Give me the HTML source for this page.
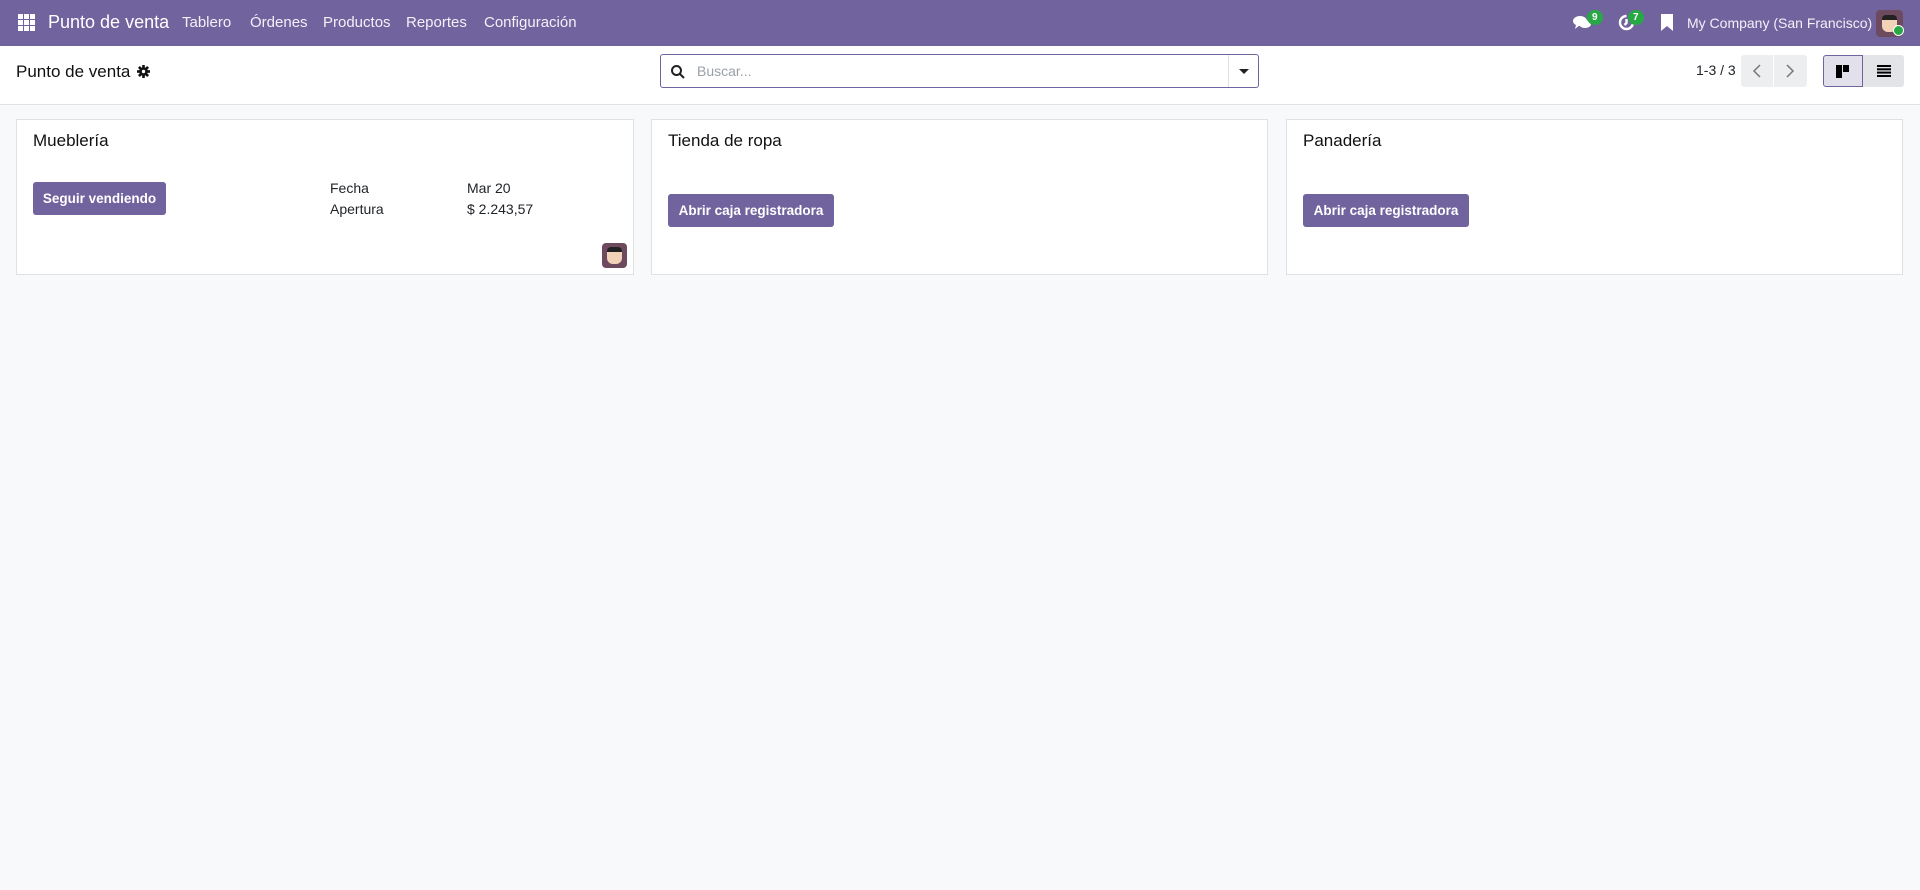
<!DOCTYPE html>
<html><head><meta charset="utf-8"><style>
*{box-sizing:border-box;margin:0;padding:0}
body{width:1920px;height:890px;background:#f8f9fb;font-family:"Liberation Sans",sans-serif;color:#212529;font-size:14px;position:relative;overflow:hidden}
.nav{position:absolute;left:0;top:0;width:1920px;height:46px;background:#71639e;color:#fff}
.nav span{position:absolute;top:14px;font-size:15px;color:#f3f0f8}
.cp{position:absolute;left:0;top:46px;width:1920px;height:59px;background:#fff;border-bottom:1px solid #e0e2e6}
.card{position:absolute;top:119px;height:156px;background:#fff;border:1px solid #dee2e6}
.card h3{position:absolute;left:16px;top:11px;font-size:17px;font-weight:normal;color:#111}
.btn{position:absolute;background:#71639e;color:#fff;border-radius:3px;font-size:13.5px;font-weight:bold;text-align:center;line-height:33px;height:33px}
.badge{position:absolute;top:10px;background:#28a745;color:#fff;font-size:10px;font-weight:bold;border-radius:8px;height:15px;line-height:15px;padding:0 5px}
</style></head><body>
<div class="nav">
<svg style="position:absolute;left:18px;top:14px" width="17" height="17" viewBox="0 0 17 17" fill="#fff"><rect x="0" y="0" width="5" height="5"/><rect x="6" y="0" width="5" height="5"/><rect x="12" y="0" width="5" height="5"/><rect x="0" y="6" width="5" height="5"/><rect x="6" y="6" width="5" height="5"/><rect x="12" y="6" width="5" height="5"/><rect x="0" y="12" width="5" height="5"/><rect x="6" y="12" width="5" height="5"/><rect x="12" y="12" width="5" height="5"/></svg>
<span style="left:48px;top:12px;font-size:18px;color:#fff">Punto de venta</span>
<span style="left:182px">Tablero</span>
<span style="left:250px">Órdenes</span>
<span style="left:323px">Productos</span>
<span style="left:406px">Reportes</span>
<span style="left:484px">Configuración</span>
<svg style="position:absolute;left:1573px;top:15px" width="18" height="15" viewBox="0 0 18 15" fill="#fff"><ellipse cx="7" cy="6" rx="7" ry="5"/><path d="M3 10 L2 14 L7 10Z"/><ellipse cx="12" cy="9" rx="6" ry="4"/></svg>
<div class="badge" style="left:1587px">9</div>
<svg style="position:absolute;left:1618px;top:14px" width="17" height="17" viewBox="0 0 17 17" fill="none" stroke="#fff" stroke-width="2.4"><path d="M15 8.5A6.5 6.5 0 1 1 8.5 2"/><path d="M8.5 5v4l-2 2"/></svg>
<div class="badge" style="left:1628px">7</div>
<svg style="position:absolute;left:1661px;top:14px" width="12" height="17" viewBox="0 0 12 17" fill="#fff"><path d="M0 0h12v17l-6-5-6 5z"/></svg>
<span style="left:1687px;font-size:14px;top:15px">My Company (San Francisco)</span>
<div style="position:absolute;left:1876px;top:10px;width:27px;height:27px;border-radius:4px;background:#6e4a5e"><div style="position:absolute;left:6px;top:5px;width:15px;height:17px;background:#f2d3b8;border-radius:4px 4px 6px 6px;border-top:5px solid #222"></div></div>
<div style="position:absolute;left:1893px;top:25px;width:11px;height:11px;border-radius:50%;background:#28a745;border:1.5px solid #fff"></div>
</div>
<div class="cp">
<div style="position:absolute;left:16px;top:16px;font-size:17px;color:#111">Punto de venta</div>
<svg style="position:absolute;left:137px;top:19px" width="13" height="13" viewBox="0 0 13 13"><g fill="#111"><circle cx="6.5" cy="6.5" r="4.3"/><rect x="5.2" y="0" width="2.6" height="13"/><rect x="0" y="5.2" width="13" height="2.6"/><rect x="5.2" y="0" width="2.6" height="13" transform="rotate(45 6.5 6.5)"/><rect x="5.2" y="0" width="2.6" height="13" transform="rotate(-45 6.5 6.5)"/></g><circle cx="6.5" cy="6.5" r="1.7" fill="#fff"/></svg>
<div style="position:absolute;left:660px;top:8px;width:599px;height:34px;border:1px solid #71639e;border-radius:3px;background:#fff">
<svg style="position:absolute;left:10px;top:10px" width="14" height="14" viewBox="0 0 14 14" fill="none" stroke="#222" stroke-width="2"><circle cx="5.5" cy="5.5" r="4.5"/><path d="M9 9l4 4"/></svg>
<span style="position:absolute;left:36px;top:8px;color:#9aa0a6;font-size:14px">Buscar...</span>
<div style="position:absolute;right:0;top:0;width:30px;height:32px;border-left:1px solid #dee2e6"><div style="position:absolute;left:10px;top:14px;border-left:5px solid transparent;border-right:5px solid transparent;border-top:5px solid #222"></div></div>
</div>
<span style="position:absolute;left:1696px;top:16px;font-size:14px">1-3 / 3</span>
<div style="position:absolute;left:1741px;top:9px;width:66px;height:32px;background:#eceef0;border-radius:3px"><div style="position:absolute;left:32px;top:0;width:1px;height:32px;background:#fff"></div>
<svg style="position:absolute;left:11px;top:9px" width="10" height="14" viewBox="0 0 10 14" fill="none" stroke="#777" stroke-width="1.5"><path d="M8 1L2 7l6 6"/></svg>
<svg style="position:absolute;left:44px;top:9px" width="10" height="14" viewBox="0 0 10 14" fill="none" stroke="#777" stroke-width="1.5"><path d="M2 1l6 6-6 6"/></svg></div>
<div style="position:absolute;left:1823px;top:9px;width:40px;height:32px;background:#e2e0eb;border:1px solid #71639e;border-radius:3px 0 0 3px"><div style="position:absolute;left:12px;top:9px;width:6px;height:13px;background:#000"></div><div style="position:absolute;left:19px;top:9px;width:6px;height:7px;background:#000"></div></div>
<div style="position:absolute;left:1863px;top:9px;width:41px;height:32px;background:#e2e4e8;border-radius:0 3px 3px 0"><svg style="position:absolute;left:14px;top:10px" width="14" height="12" viewBox="0 0 14 12" fill="#000"><rect y="0" width="14" height="2"/><rect y="3.3" width="14" height="2"/><rect y="6.6" width="14" height="2"/><rect y="10" width="14" height="2"/></svg></div>
</div>
<div class="card" style="left:16px;width:618px">
<h3>Mueblería</h3>
<div class="btn" style="left:16px;top:62px;width:133px">Seguir vendiendo</div>
<div style="position:absolute;left:313px;top:58px;line-height:21px;font-size:14px">Fecha<br>Apertura</div>
<div style="position:absolute;left:450px;top:58px;line-height:21px;font-size:14px">Mar 20<br>$ 2.243,57</div>
<div style="position:absolute;left:585px;top:123px;width:25px;height:25px;border-radius:4px;background:#6e4a5e"><div style="position:absolute;left:5px;top:4px;width:15px;height:17px;background:#f2d3b8;border-radius:4px 4px 6px 6px;border-top:5px solid #222"></div></div>
</div>
<div class="card" style="left:651px;width:617px">
<h3>Tienda de ropa</h3>
<div class="btn" style="left:16px;top:74px;width:166px">Abrir caja registradora</div>
</div>
<div class="card" style="left:1286px;width:617px">
<h3>Panadería</h3>
<div class="btn" style="left:16px;top:74px;width:166px">Abrir caja registradora</div>
</div>
</body></html>
